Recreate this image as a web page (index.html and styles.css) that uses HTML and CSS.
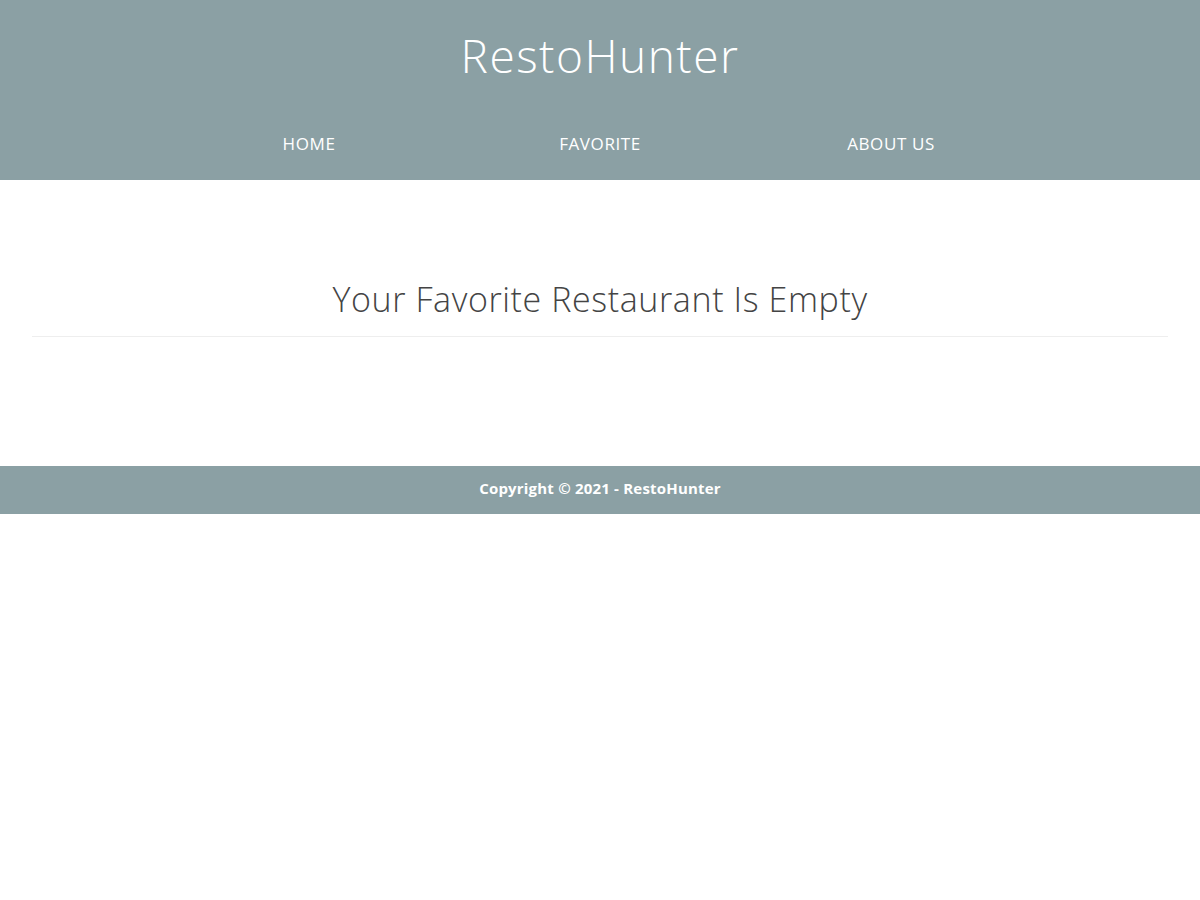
FILE: index.html
```html
<!DOCTYPE html>
<html lang="en">
<head>
<meta charset="utf-8">
<title>RestoHunter</title>
<link rel="stylesheet" href="styles.css">
</head>
<body>
<header class="app-bar">
  <h1 class="brand">RestoHunter</h1>
  <nav class="nav">
    <ul class="nav-list">
      <li class="nav-item"><a href="#">HOME</a></li>
      <li class="nav-item"><a href="#">FAVORITE</a></li>
      <li class="nav-item"><a href="#">ABOUT US</a></li>
    </ul>
  </nav>
</header>
<main class="content">
  <h2 class="content-title">Your Favorite Restaurant Is Empty</h2>
  <hr class="divider">
</main>
<footer class="footer">
  <p>Copyright © 2021 - RestoHunter</p>
</footer>
</body>
</html>
```

FILE: styles.css
```css
* { box-sizing: border-box; }
html, body { margin: 0; padding: 0; background: #fff; }
body { font-family: "Open Sans", "Lato", sans-serif; color: #444; }

.app-bar {
  background: #8ba0a4;
  height: 180px;
  display: flex;
  flex-direction: column;
  align-items: center;
}
.brand {
  margin: 26px 0 0;
  font-size: 46px;
  font-weight: 300;
  letter-spacing: 1.5px;
  line-height: 58px;
  color: #fff;
}
.nav { margin-top: 48px; }
.nav-list {
  list-style: none;
  margin: 0;
  padding: 0;
  display: grid;
  grid-template-columns: repeat(3, 291px);
}
.nav-item { text-align: center; }
.nav-item a {
  color: #fff;
  text-decoration: none;
  font-size: 17px;
  letter-spacing: 0.6px;
  line-height: 24px;
}

.content {
  height: 286px;
  padding: 96px 32px 0;
}
.content-title {
  margin: 0;
  text-align: center;
  font-size: 34px;
  font-weight: 300;
  letter-spacing: 0.6px;
  line-height: 46px;
  color: #444;
}
.divider {
  margin: 14px 0 0;
  border: 0;
  border-top: 1px solid #eee;
}

.footer {
  background: #8ba0a4;
  height: 48px;
  display: flex;
  align-items: center;
  justify-content: center;
}
.footer p {
  margin: 0 0 4px;
  color: #fff;
  font-weight: 700;
  font-size: 15px;
  letter-spacing: 0.2px;
}
```
